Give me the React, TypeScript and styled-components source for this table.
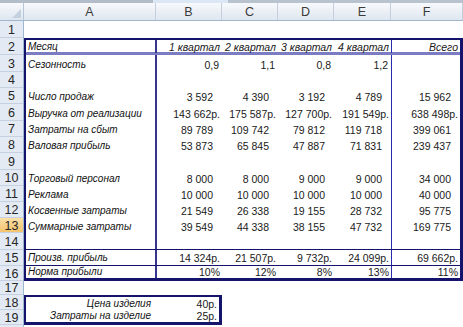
import React from "react";
import styled, { createGlobalStyle } from "styled-components";

const GlobalStyle = createGlobalStyle`
  html, body { margin: 0; padding: 0; background: #ffffff; }
  body { font-family: "Liberation Sans", Arial, sans-serif; }
`;

const NAVY = "#14146c";

type Kind = "num" | "money" | "pct" | "dec";

interface DataRow {
  h: number;
  nudge?: number;
  label?: string;
  vals?: string[];
  kind?: Kind;
  line?: "head" | "thin";
  head?: boolean;
}

const colLetters = [
  { l: "A", w: 132 },
  { l: "B", w: 66 },
  { l: "C", w: 56 },
  { l: "D", w: 56 },
  { l: "E", w: 57 },
  { l: "F", w: 72 },
];

const rowHeights = [17, 17, 17, 16, 16, 17, 16, 16, 17, 16, 16, 16, 15, 17, 16, 15, 14, 15, 15];

const mainRows: DataRow[] = [
  { h: 15, nudge: 1, label: "Месяц", vals: ["1 квартал", "2 квартал", "3 квартал", "4 квартал", "Всего"], line: "head", head: true },
  { h: 17, label: "Сезонность", vals: ["0,9", "1,1", "0,8", "1,2", ""], kind: "dec" },
  { h: 16 },
  { h: 16, label: "Число продаж", vals: ["3 592", "4 390", "3 192", "4 789", "15 962"], kind: "num" },
  { h: 17, label: "Выручка от реализации", vals: ["143 662р.", "175 587р.", "127 700р.", "191 549р.", "638 498р."], kind: "money" },
  { h: 16, label: "Затраты на сбыт", vals: ["89 789", "109 742", "79 812", "119 718", "399 061"], kind: "num" },
  { h: 16, label: "Валовая прибыль", vals: ["53 873", "65 845", "47 887", "71 831", "239 437"], kind: "num" },
  { h: 17 },
  { h: 16, label: "Торговый персонал", vals: ["8 000", "8 000", "9 000", "9 000", "34 000"], kind: "num" },
  { h: 16, label: "Реклама", vals: ["10 000", "10 000", "10 000", "10 000", "40 000"], kind: "num" },
  { h: 16, label: "Косвенные затраты", vals: ["21 549", "26 338", "19 155", "28 732", "95 775"], kind: "num" },
  { h: 15, label: "Суммарные затраты", vals: ["39 549", "44 338", "38 155", "47 732", "169 775"], kind: "num" },
  { h: 17, line: "thin" },
  { h: 16, nudge: 1, label: "Произв. прибыль", vals: ["14 324р.", "21 507р.", "9 732р.", "24 099р.", "69 662р."], kind: "money", line: "thin" },
  { h: 12, nudge: 0, label: "Норма прибыли", vals: ["10%", "12%", "8%", "13%", "11%"], kind: "pct" },
];

const padFor: Record<Kind, number> = { num: 9, money: 2, pct: 2, dec: 3 };

const Page = styled.div`
  width: 463px;
  height: 327px;
  overflow: hidden;
  background: #ffffff;
  display: flex;
  flex-direction: column;
  font-family: "Liberation Sans", Arial, sans-serif;
`;

const TopStrip = styled.div`
  height: 3px;
  flex: none;
  background: linear-gradient(
    to right,
    #b3bdc9 0,
    #b3bdc9 153px,
    #dce7f5 153px,
    #dce7f5 228px,
    #b9c3cf 228px
  );
`;

const ColHeaderBar = styled.div`
  height: 18px;
  flex: none;
  display: flex;
  box-sizing: border-box;
  background: linear-gradient(#f7f9fc, #dfe6ef);
  border-bottom: 1px solid #9eb6ce;
`;

const Corner = styled.div`
  width: 24px;
  flex: none;
  position: relative;
  box-sizing: border-box;
  border-right: 1px solid #b6c5d8;
  &::after {
    content: "";
    position: absolute;
    right: 2px;
    bottom: 2px;
    border-style: solid;
    border-width: 0 0 9px 9px;
    border-color: transparent transparent #c4d0de transparent;
  }
`;

const ColLetter = styled.div<{ $w: number }>`
  width: ${(p) => p.$w}px;
  flex: none;
  box-sizing: border-box;
  border-right: 1px solid #c3cfde;
  display: flex;
  align-items: center;
  justify-content: center;
  padding-top: 1px;
  font-size: 12.5px;
  color: #3a3a3a;
`;

const Body = styled.div`
  display: flex;
  flex: 1;
  min-height: 0;
`;

const RowHeads = styled.div`
  width: 24px;
  flex: none;
  display: flex;
  flex-direction: column;
  box-sizing: border-box;
  background: #e3eaf4;
  border-right: 1px solid #9eb6ce;
`;

const RowHead = styled.div<{ $h: number; $active?: boolean }>`
  height: ${(p) => p.$h}px;
  flex: none;
  box-sizing: border-box;
  border-bottom: 1px solid #c5d1e0;
  display: flex;
  align-items: center;
  justify-content: center;
  padding-top: 1px;
  font-size: 12.5px;
  color: #262626;
  background: ${(p) => (p.$active ? "linear-gradient(#fbe0a8, #f5c46e)" : "transparent")};
`;

const SheetArea = styled.div`
  flex: 1;
  display: flex;
  flex-direction: column;
`;

const BlankRow = styled.div<{ $h: number }>`
  height: ${(p) => p.$h}px;
  flex: none;
`;

const MainTable = styled.div`
  width: 439px;
  flex: none;
  box-sizing: border-box;
  border: 2px solid ${NAVY};
  border-right-width: 3px;
  border-bottom-width: 3px;
  display: flex;
  flex-direction: column;
`;

const TRow = styled.div<{ $h: number; $nudge: number; $line?: "head" | "thin" }>`
  --nudge: ${(p) => p.$nudge}px;
  height: ${(p) => p.$h}px;
  flex: none;
  box-sizing: border-box;
  display: grid;
  grid-template-columns: 129px 67px 56px 56px 57px 1fr;
  border-bottom: ${(p) =>
    p.$line === "head" ? "3px solid #7c7cc2" : p.$line === "thin" ? `1px solid ${NAVY}` : "none"};
`;

const Label = styled.div<{ $right?: boolean }>`
  display: flex;
  align-items: center;
  justify-content: ${(p) => (p.$right ? "flex-end" : "flex-start")};
  box-sizing: border-box;
  padding: var(--nudge, 2px) ${(p) => (p.$right ? "4px" : "0")} 0 ${(p) => (p.$right ? "0" : "2px")};
  line-height: 12px;
  font-style: italic;
  font-size: 10px;
  color: #111111;
  white-space: nowrap;
`;

const Value = styled.div<{ $pad: number; $rule?: "thick" | "thin"; $italic?: boolean }>`
  display: flex;
  align-items: center;
  justify-content: flex-end;
  box-sizing: border-box;
  padding-top: var(--nudge, 2px);
  padding-right: ${(p) => p.$pad}px;
  line-height: 12px;
  font-size: 10.5px;
  font-style: ${(p) => (p.$italic ? "italic" : "normal")};
  color: #1a1a1a;
  white-space: nowrap;
  border-left: ${(p) =>
    p.$rule === "thick" ? "2px solid #36368e" : p.$rule === "thin" ? "1px solid #2a2aae" : "none"};
`;

const SmallTable = styled.div`
  width: 198px;
  flex: none;
  box-sizing: border-box;
  border: 2px solid ${NAVY};
  border-right-width: 3px;
  border-bottom-width: 3px;
  display: flex;
  flex-direction: column;
`;

const SRow = styled.div<{ $h: number; $nudge: number }>`
  --nudge: ${(p) => p.$nudge}px;
  height: ${(p) => p.$h}px;
  flex: none;
  display: grid;
  grid-template-columns: 129px 1fr;
`;

const ruleFor = (i: number): "thick" | "thin" | undefined =>
  i === 0 ? "thick" : i === 4 ? "thin" : undefined;

export default function App() {
  return (
    <>
      <GlobalStyle />
      <Page>
        <TopStrip />
        <ColHeaderBar>
          <Corner />
          {colLetters.map((c) => (
            <ColLetter key={c.l} $w={c.w}>
              {c.l}
            </ColLetter>
          ))}
        </ColHeaderBar>
        <Body>
          <RowHeads>
            {rowHeights.map((h, i) => (
              <RowHead key={i} $h={h} $active={i === 12}>
                {i + 1}
              </RowHead>
            ))}
          </RowHeads>
          <SheetArea>
            <BlankRow $h={17} />
            <MainTable>
              {mainRows.map((r, ri) => (
                <TRow key={ri} $h={r.h} $nudge={r.nudge ?? 2} $line={r.line}>
                  <Label>{r.label ?? ""}</Label>
                  {(r.vals ?? ["", "", "", "", ""]).map((v, i) => (
                    <Value
                      key={i}
                      $rule={ruleFor(i)}
                      $italic={r.head}
                      $pad={r.head ? 2 : r.kind ? padFor[r.kind] : 2}
                    >
                      {v}
                    </Value>
                  ))}
                </TRow>
              ))}
            </MainTable>
            <BlankRow $h={14} />
            <SmallTable>
              <SRow $h={13} $nudge={1}>
                <Label $right>Цена изделия</Label>
                <Value $pad={2}>40р.</Value>
              </SRow>
              <SRow $h={12} $nudge={0}>
                <Label $right>Затраты на изделие</Label>
                <Value $pad={2}>25р.</Value>
              </SRow>
            </SmallTable>
          </SheetArea>
        </Body>
      </Page>
    </>
  );
}
